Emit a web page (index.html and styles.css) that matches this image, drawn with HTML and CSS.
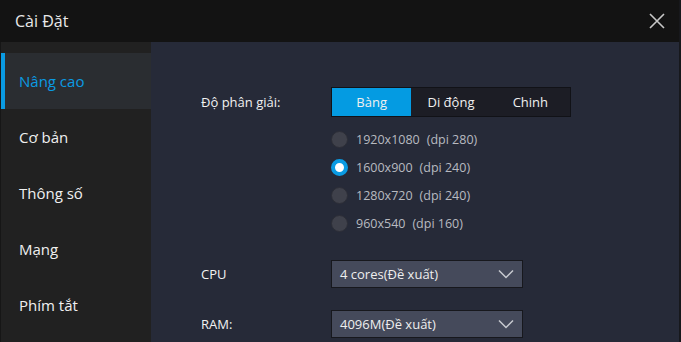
FILE: index.html
```html
<!DOCTYPE html>
<html lang="vi">
<head>
    <meta charset="UTF-8">
    <title>Cài Đặt</title>
    <link rel="stylesheet" href="styles.css">
</head>
<body>
    <div class="window">
        <div class="header">
            <div class="title">Cài Đặt</div>
            <div class="close">
                <svg width="16" height="16" viewBox="0 0 16 16">
                    <path d="M1 1 L15 15 M15 1 L1 15" stroke="#c8c8c8" stroke-width="1.6" fill="none"/>
                </svg>
            </div>
        </div>
        <div class="main">
            <div class="sidebar">
                <div class="menu-item active">Nâng cao</div>
                <div class="menu-item">Cơ bản</div>
                <div class="menu-item">Thông số</div>
                <div class="menu-item">Mạng</div>
                <div class="menu-item">Phím tắt</div>
            </div>
            <div class="content">
                <div class="row">
                    <label class="label">Độ phân giải:</label>
                    <div class="segment">
                        <div class="seg-btn selected">Bàng</div>
                        <div class="seg-btn">Di động</div>
                        <div class="seg-btn">Chinh</div>
                    </div>
                </div>
                <div class="radios">
                    <div class="radio-row"><span class="radio"></span><span class="res">1920x1080</span><span>(dpi 280)</span></div>
                    <div class="radio-row"><span class="radio checked"></span><span class="res">1600x900</span><span>(dpi 240)</span></div>
                    <div class="radio-row"><span class="radio"></span><span class="res">1280x720</span><span>(dpi 240)</span></div>
                    <div class="radio-row"><span class="radio"></span><span class="res">960x540</span><span>(dpi 160)</span></div>
                </div>
                <div class="row select-row cpu">
                    <label class="label">CPU</label>
                    <div class="dropdown">
                        <span>4 cores(Đề xuất)</span>
                        <svg width="16" height="10" viewBox="0 0 16 10">
                            <path d="M1 1.5 L8 8.5 L15 1.5" stroke="#c8cad0" stroke-width="1.5" fill="none"/>
                        </svg>
                    </div>
                </div>
                <div class="row select-row">
                    <label class="label">RAM:</label>
                    <div class="dropdown">
                        <span>4096M(Đề xuất)</span>
                        <svg width="16" height="10" viewBox="0 0 16 10">
                            <path d="M1 1.5 L8 8.5 L15 1.5" stroke="#c8cad0" stroke-width="1.5" fill="none"/>
                        </svg>
                    </div>
                </div>
            </div>
        </div>
    </div>
</body>
</html>
```

FILE: styles.css
```css
* {
    box-sizing: border-box;
}

html,
body {
    margin: 0;
    height: 100%;
    background: #141414;
    overflow: hidden;
}

body {
    font-family: "Open Sans", "Noto Sans", sans-serif;
    color: #e6e6e6;
}

.window {
    height: 342px;
    display: flex;
    flex-direction: column;
    border-right: 2px solid #17181c;
}

.header {
    height: 42px;
    display: flex;
    align-items: center;
    justify-content: space-between;
    padding: 0 14px 0 15px;
    background: #131313;
}

.title {
    font-size: 16px;
    color: #e8e8e8;
}

.close {
    display: flex;
}

.main {
    flex: 1;
    display: flex;
}

.sidebar {
    width: 151px;
    background: #212121;
    border-left: 1px solid #161616;
    padding-top: 11px;
}

.menu-item {
    height: 56px;
    display: flex;
    align-items: center;
    padding-left: 18px;
    font-size: 15px;
    color: #f0f0f0;
}

.menu-item.active {
    background: #2a2d31;
    color: #0a9be3;
    border-left: 4px solid #0a9be3;
    padding-left: 14px;
}

.content {
    flex: 1;
    background: #262a38;
    padding: 45px 0 0 50px;
    font-size: 13px;
}

.row {
    display: flex;
    align-items: center;
}

.label {
    width: 130px;
    color: #f2f2f2;
}

.segment {
    display: flex;
    width: 240px;
    height: 30px;
    border: 1px solid #111217;
    background: #1c1d25;
}

.seg-btn {
    flex: 1;
    display: flex;
    align-items: center;
    justify-content: center;
    color: #f0f0f0;
}

.seg-btn.selected {
    background: #049be2;
}

.radios {
    margin: 8px 0 0 130px;
}

.radio-row {
    height: 28px;
    display: flex;
    align-items: center;
    font-size: 12.5px;
    color: #b8bac0;
}

.radio {
    flex-shrink: 0;
    width: 17px;
    height: 17px;
    border-radius: 50%;
    background: #3f414b;
    border: 1px solid #2c2e37;
    margin-right: 8px;
}

.radio.checked {
    background: #fff;
    border: 4px solid #0a9be3;
}

.res {
    margin-right: 7px;
}

.select-row {
    margin-top: 22px;
}

.select-row.cpu {
    margin-top: 23px;
}

.dropdown {
    width: 192px;
    height: 28px;
    display: flex;
    align-items: center;
    justify-content: space-between;
    padding: 0 8px 0 8px;
    background: #454a5b;
    border: 1px solid #17181d;
    color: #eeeeee;
}
```
